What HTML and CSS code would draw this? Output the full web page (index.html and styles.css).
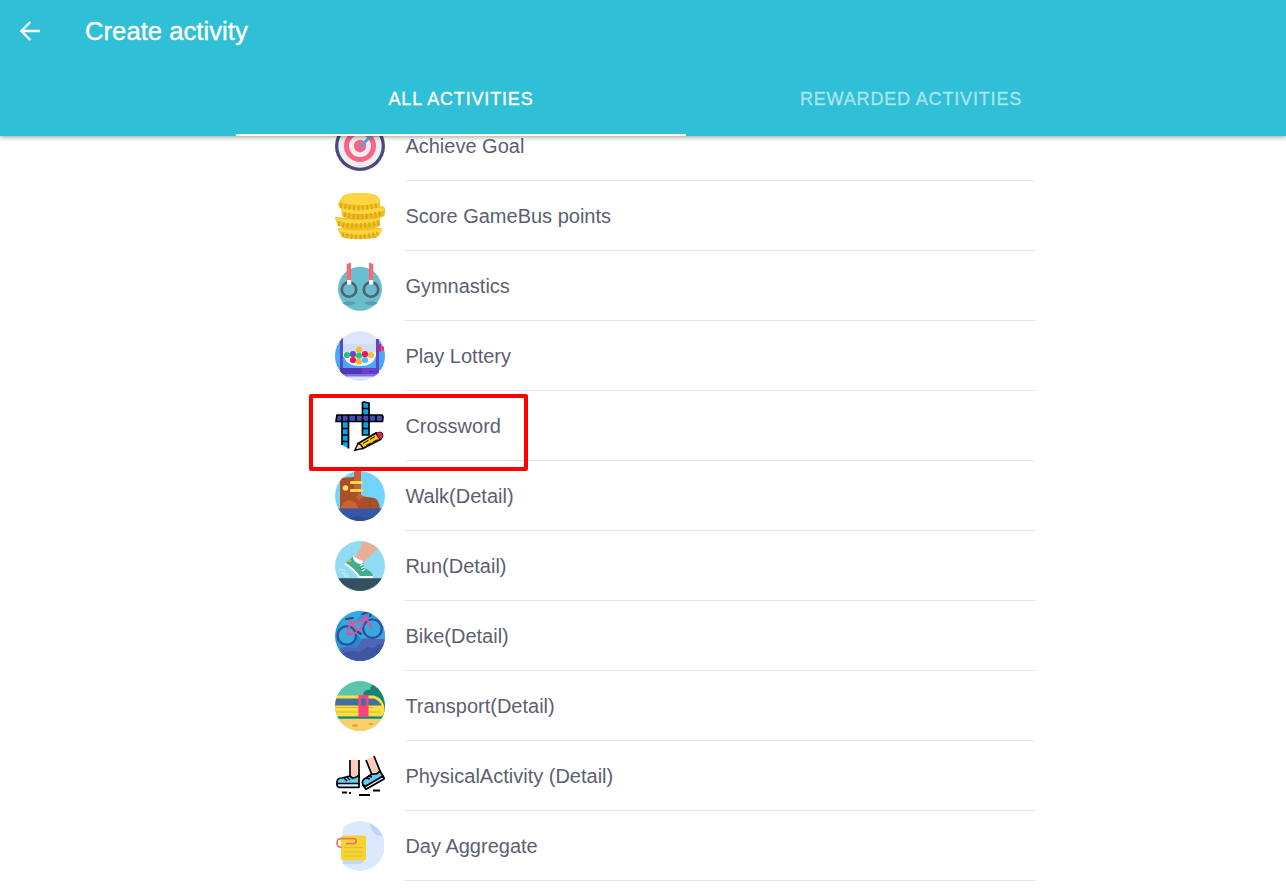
FILE: index.html
```html
<!DOCTYPE html>
<html lang="en">
<head>
<meta charset="utf-8">
<title>Create activity</title>
<link rel="stylesheet" href="styles.css">
</head>
<body>
<div class="page">
<header class="header">
  <div class="toolbar">
    <svg class="back" viewBox="0 0 20 20"><path d="M20 10H1.5M10.3 1 1.4 10l8.9 9" fill="none" stroke="#fff" stroke-width="2.4"/></svg>
    <h1 class="title">Create activity</h1>
  </div>
  <nav class="tabs">
    <a class="tab tab-active">ALL ACTIVITIES</a>
    <a class="tab">REWARDED ACTIVITIES</a>
  </nav>
</header>
<svg width="0" height="0" class="defs"><defs><clipPath id="round"><circle cx="25" cy="25" r="25"/></clipPath></defs></svg>
<main class="list">
  <div class="item">
    <svg class="icon" viewBox="0 0 50 50"><circle cx="25" cy="25" r="25" fill="#484a80"/><circle cx="25" cy="25" r="21.7" fill="#efefef"/><circle cx="25" cy="25" r="16" fill="#ff6289"/><circle cx="25" cy="25" r="11" fill="#efefef"/><circle cx="25" cy="25" r="6.2" fill="#ff6289"/><path d="M25 26 38 13" stroke="#5ba0d2" stroke-width="2.8"/><path d="M36 15.5h7l3-4h-7z" fill="#e95c86"/></svg>
    <div class="label">Achieve Goal</div>
  </div>
  <div class="item">
    <svg class="icon" viewBox="0 0 50 50"><path d="M3 37h44v2q-2 5-6 8-7 1-16 1T9 47q-4-3-6-8z" fill="#efc01f"/><path d="M0 26q22 3 45 1v8q-8 4-22 4-13 0-19-4Q1 31 0 27z" fill="#efc01f"/><path d="M6 16q21 3 42-1 4 3 1 10-6 4-23 4-14 0-19-4z" fill="#efbd20"/><path d="M3 13 8 5q3-3 17-3t17 3l3 4v7q-4 4-20 4-14 0-18-4-4 0-4-3z" fill="#f3c321"/><path d="M6 11 9 5q4-3 16-3t16 3l4 6q-3 3-18 3T6 11zM6 17q18 4 42-1l2 3q-5 4-23 4T6 19zM0 27q20 4 45 0v2q-5 4-22 4T1 29zM3 37q18 5 44 0v3q-5 4-21 4T4 40z" fill="#ffd63f"/><g fill="none" stroke="#dba918" stroke-width="5" stroke-dasharray="2 2.4"><path d="M5 14.5q19 5 39-.5M9 23.5q19 5 39-2M3 32.5q19 5 41-1M7 43.5q18 5 36-1"/></g></svg>
    <div class="label">Score GameBus points</div>
  </div>
  <div class="item">
    <svg class="icon" viewBox="0 0 50 50"><circle cx="25" cy="27.8" r="22" fill="#69becd"/><ellipse cx="14" cy="42.2" rx="6" ry="2" fill="#589eac"/><ellipse cx="36" cy="42.2" rx="6" ry="2" fill="#589eac"/><path d="m11.8 3 4.2-1.5V20h-4.2zM34 1.5 38.2 3v17H34z" fill="#ff6676"/><g fill="none" stroke="#52626d" stroke-width="2.6"><circle cx="14" cy="28.5" r="7.2"/><circle cx="36" cy="28.5" r="7.2"/></g><path d="M12 19h4.2v4.5H12zm22 0h4.2v4.5H34z" fill="#fff"/></svg>
    <div class="label">Gymnastics</div>
  </div>
  <div class="item">
    <svg class="icon" viewBox="0 0 50 50"><g clip-path="url(#round)"><path fill="#dce5fb" d="M0 0h50v50H0z"/><path d="M0 7h7v32H0zm43 0h7v32h-7zM7 26h36v12H7z" fill="#49a8fa"/><path d="M5 7h3v35H5zm36 1h3v34h-3z" fill="#5e49c4"/><path d="M8 13h33v10H8z" fill="#d1dcf5"/><path d="M8 21q1 14 17 14t16-14z" fill="#f4f4ff"/><path d="M5 37h39v6H5z" fill="#673fc8"/><path d="M5 37h22v6H5z" fill="#5038b4"/><path d="M3 43h44v2.5H3z" fill="#806edc"/><path d="M34 40.5h4" stroke="#4233a6"/></g><g><circle cx="24" cy="18.7" r="3.1" fill="#ffb73b"/><circle cx="12" cy="24" r="3.1" fill="#20c47b"/><circle cx="18" cy="23.2" r="3.1" fill="#7744c9"/><circle cx="24" cy="24.7" r="3.1" fill="#26c979"/><circle cx="30" cy="23.2" r="3.1" fill="#ec1555"/><circle cx="36" cy="24" r="3.1" fill="#ffb83b"/><circle cx="18" cy="29" r="3.1" fill="#ec1555"/><circle cx="24" cy="30.5" r="3.1" fill="#ffb83b"/><circle cx="30" cy="29" r="3.1" fill="#52b8ff"/></g><path d="M43.5 13h2.3v7.5h-2.3z" fill="#ec1555"/><ellipse cx="47.7" cy="17.5" rx="1.4" ry="2.6" fill="#ef326f"/></svg>
    <div class="label">Play Lottery</div>
  </div>
  <div class="item item-marked">
    <svg class="icon" viewBox="0 0 50 50"><g stroke="#000" stroke-width="1.7" stroke-linejoin="round"><path d="M27.5 1.5 29 1l5 1v32h-6.5z" fill="#05a5ed"/><path d="M27.5 7.5H34M27.5 27.5H34"/><path d="M7 20h6.5v27.5L7 44z" fill="#05a5ed" stroke="none"/><path d="M7 44V20h6.5v27.5M7 27.5h6.5M7 34h6.5M7 40.5h6.5" fill="none"/><path d="M2 14h45l1 2-.5 4.500H1z" fill="#414cb4"/><path d="M7 14v6.5m6.5-6.5v6.5M21 14v6.5m6.5-6.500v6.5M34 14v6.5m7-6.5v6.500"/></g><path d="m23 42.500 18-10.500 4.500 6.500L28 47.500z" fill="#ffca13" stroke="#000" stroke-width="1.700"/><path d="m41 32 4-1q3 .4 3 3.200l-.5 2.700-2.500 2z" fill="#e82350" stroke="#000" stroke-width=".7"/><path d="m19.800 49.200 3.200-6.700q3.500.500 5 5z" fill="#ffd996" stroke="#000" stroke-width="1.400"/><path d="m28 42.500 5.500-3.300m1.500-.8 5-2.900M31 44.500l5-2.500m1.500-.8 5-2.500" stroke="#000" stroke-width="1"/></svg>
    <div class="label">Crossword</div>
  </div>
  <div class="item">
    <svg class="icon" viewBox="0 0 50 50"><g clip-path="url(#round)"><path fill="#72d3ff" d="M0 0h50v50H0z"/><path d="M5 7 19 6V0h7v25l13 2q5 1 6 11H5z" fill="#a95028"/><path d="M19 0h7v21l-7-2zM5 38l4-7q6-4 12 1l3 6z" fill="#c96235"/><path d="m24 22 5 4-5 3-3-3z" fill="#c96235"/><path d="M35 27v10" stroke="#87402b" stroke-dasharray="2 1.5"/><path d="M0 37.5h50V50H0z" fill="#3757a5"/><path d="M0 46q5-2 9 0t9 0 9 0 9 0 14 0v4H0z" fill="#2f4d91"/><circle cx="10.5" cy="17" r="2.8" fill="#ffdc50"/><path d="M16.5 11.5h10M16.5 19.5h10" stroke="#ffdb4d" stroke-width="3.2" stroke-linecap="round"/></g></svg>
    <div class="label">Walk(Detail)</div>
  </div>
  <div class="item">
    <svg class="icon" viewBox="0 0 50 50"><g clip-path="url(#round)"><path fill="#91daf3" d="M0 0h50v50H0z"/><path d="M19 17Q25 10 28 0l16 6-15 15q-6 1-10-4z" fill="#e9ae98"/><path d="m10 22.500 8-7q5 5 10 6.500l1 5q8 3 9 8H24Q18 27 10 22.500z" fill="#42ac8c"/><path d="m18 14.500 3 2.500 7 3-1 3.500q-7-1-9-6z" fill="#fff"/><path d="m12.500 20.500 2.500-2.500 2 2-3 1.500z" fill="#b5c43c"/><path d="M10 22.500q9 5.500 14.500 13.700H38" fill="none" stroke="#fff" stroke-width="2"/><path d="m25 24.500 3-1m-2 4 3-1.500m-2 4 3-1.500" stroke="#e9fff8" stroke-width="1.200"/><path d="m4 28 6 2m-4 2 6 1m-3 2h5" stroke="#bceaf8" stroke-width="1.5"/><path d="M0 37.3h50V50H0z" fill="#34505f"/></g></svg>
    <div class="label">Run(Detail)</div>
  </div>
  <div class="item">
    <svg class="icon" viewBox="0 0 50 50"><g clip-path="url(#round)"><path fill="#249bd6" d="M0 0h50v50H0z"/><path d="M12 0h15l-5 10L42 5l8 5v27H10L0 25z" fill="#35aade"/><path d="M5 40 18 31l4-8 7 8h21v19H0z" fill="#208bcf"/><path d="m0 41 9-5 13 1 6-10 9 1h13v22H0z" fill="#5064b8"/><path d="m5 44 5-3 9-1 6 1 7-5 7 1 5-4 6 1v16H5z" fill="#3d56a4"/><g fill="none" stroke="#344f99" stroke-width="2.4"><circle cx="11.8" cy="24.5" r="9.3"/><circle cx="37.5" cy="17.7" r="9.3"/></g><path d="m12 24 3-11 15-5-6 13-12 3m12-2L14 9M37.5 18 29 3" fill="none" stroke="#db54a0" stroke-width="2.1"/><path d="m11 8 7-1M28 3l5-2q4 1 2 4m-12 16 3 2" stroke="#33458e" stroke-width="2.2" fill="none" stroke-linecap="round"/></g></svg>
    <div class="label">Bike(Detail)</div>
  </div>
  <div class="item">
    <svg class="icon" viewBox="0 0 50 50"><g clip-path="url(#round)"><path fill="#5bc4ab" d="M0 0h50v50H0z"/><path d="M28 14q1-6 7-5 1-7 9-8l6 5v29H28z" fill="#148476"/><path d="M0 14.5h39q10 3 11 15-1 6-6 6H0z" fill="#ffdf3e"/><path d="M0 17.5h39q5 2 8 7H0z" fill="#41709e"/><path d="M0 26.5h38M0 31h46" stroke="#d7b533" stroke-width="1"/><path d="M0 35.5h50v2H0z" fill="#188272"/><path d="M0 38h50v12H0z" fill="#ffd06a"/><path d="M23.5 14h10v22h-10z" fill="#ff417d"/><path d="M26 17.5h5v7h-5z" fill="#41709e"/><ellipse cx="20" cy="44.5" rx="3" ry="1.5" fill="#dcad4c"/><ellipse cx="36" cy="43" rx="2.5" ry="1.2" fill="#dcad4c"/></g></svg>
    <div class="label">Transport(Detail)</div>
  </div>
  <div class="item">
    <svg class="icon" viewBox="0 0 50 50"><path d="M15 9h9v20h-9z" fill="#ffccbb"/><path d="m31 9 8-4 6 16-7 4z" fill="#ffccbb"/><g stroke="#000" stroke-width="1.7" stroke-linejoin="round"><path d="M15 9v18M24 9v18m7-18 6 15m2-19 6 15" fill="none"/><path d="M2 33q-1-6 5-6l8-2q4 4 9-1v9z" fill="#65cbf8"/><path d="M2 32.5h22v3.8H4q-2 0-2-3.8z" fill="#dcefff"/><path d="M28 34q-2-5 3-7l6-4q5 1 8-3l4 7-18 11z" fill="#65cbf8"/><path d="m28 34 3 4.3L49 28l-1-3-17 10z" fill="#dcefff"/></g><path d="m9 27 3 3m0-4 3 3m0-4 3 3m13-1 4 1m-2-3 4 1" stroke="#000" stroke-width="1.4"/><path d="M7 41.5h5m2 .5h2m8 2h11m3-4.5h7" stroke="#000" stroke-width="1.8"/></svg>
    <div class="label">PhysicalActivity (Detail)</div>
  </div>
  <div class="item">
    <svg class="icon" viewBox="0 0 50 50"><g clip-path="url(#round)"><path d="M8 0h26l15 16v34H8z" fill="#dce9fc"/><path d="M34 0h16v16q-5-2-9-2-6-5-7-14z" fill="#bdd7fc"/><path d="M8 38h21q0 5-4 5H8z" fill="#bed9fb"/></g><rect x="6" y="14.5" width="25" height="25" rx="2.5" fill="#f5d431"/><path d="M9 26.5h18M9 31h18M9 35h18" stroke="#e6bd31" stroke-width="1.2"/><path d="M11 22.7h8q2.3-.2 2.3-2.4t-2.3-2.6H6q-4 0-4 4.3t4 4.3h1" fill="none" stroke="#ee7668" stroke-width="1.7"/></svg>
    <div class="label">Day Aggregate</div>
  </div>
</main>
</div>
</body>
</html>
```
FILE: styles.css
```css
*, *::after { box-sizing: border-box; }
body {
  margin: 0;
  background: #fff;
  font-family: "Liberation Sans", Arial, sans-serif;
}
.page {
  height: 890px;
  overflow: hidden;
  display: flex;
  flex-direction: column;
}
.header {
  position: relative;
  z-index: 2;
  flex: none;
  height: 136px;
  background: #2fbfd6;
  box-shadow: 0 1px 5px rgba(0, 0, 0, 0.4);
}
.toolbar {
  height: 62px;
  padding-left: 20px;
  display: flex;
  align-items: center;
  gap: 45px;
}
.back { width: 20px; height: 20px; }
.title {
  margin: 0;
  color: #fff;
  font-size: 25.7px;
  font-weight: 400;
  line-height: 30px;
  -webkit-text-stroke: 0.35px currentColor;
}
.tabs {
  width: 900px;
  height: 74px;
  margin-left: 236px;
  display: flex;
}
.tab {
  flex: 1;
  display: flex;
  align-items: center;
  justify-content: center;
  border-bottom: 2px solid transparent;
  padding-top: 2px;
  color: rgba(255, 255, 255, 0.54);
  font-size: 18px;
  letter-spacing: 0.83px;
  -webkit-text-stroke: 0.35px currentColor;
}
.tab-active { color: #fff; border-bottom-color: #fff; }
.defs { position: absolute; }
.list {
  width: 700px;
  margin: -25px 0 0 335px;
  display: flex;
  flex-direction: column;
}
.item {
  position: relative;
  flex: none;
  height: 70px;
  display: flex;
  align-items: center;
  gap: 20px;
}
.icon { width: 50px; height: 50px; flex: none; display: block; }
.label {
  flex: 1;
  height: 70px;
  padding-left: 0.4px;
  border-bottom: 1px solid #e3e3e3;
  color: #5c6070;
  font-size: 20px;
  line-height: 71px;
}
.item-marked::after {
  content: "";
  position: absolute;
  z-index: 1;
  left: -26px;
  top: 3px;
  width: 219px;
  height: 77px;
  border: 4px solid #f00;
  border-radius: 2px;
}
```
